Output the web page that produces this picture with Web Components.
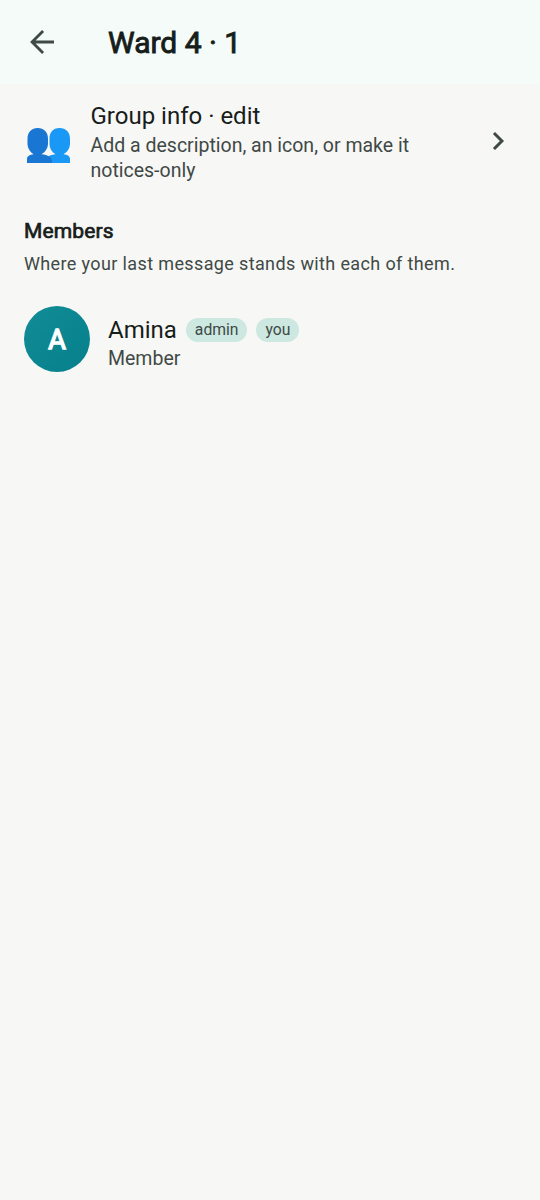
<!DOCTYPE html>
<html lang="en">
<head>
<meta charset="utf-8">
<title>Ward 4</title>
<style>
html,body{margin:0;height:100%;background:#f7f7f5}
body{font-family:Roboto,"Liberation Sans",sans-serif;color:#171d1b}
</style>
</head>
<body>
<group-screen></group-screen>
<script>
function define(name, html) {
  const t = document.createElement('template');
  t.innerHTML = html;
  customElements.define(name, class extends HTMLElement {
    constructor() {
      super();
      this.attachShadow({mode: 'open'}).append(t.content.cloneNode(true));
    }
  });
}

define('app-bar', `
<style>
:host{display:flex;align-items:center;height:84px;background:#f4fbf8;padding-left:24px;box-sizing:border-box}
svg{width:36px;height:36px;flex:none;margin-right:48px}
h1{margin:0;padding-top:2px;font-size:30px;line-height:36px;font-weight:400;-webkit-text-stroke:.9px #171d1b;white-space:nowrap}
</style>
<svg viewBox="0 0 24 24" fill="none" stroke="#3f4946" stroke-width="1.900"><path d="M20 12H5.400M12.700 4.700 5.400 12l7.300 7.300"/></svg>
<h1><slot></slot></h1>`);

define('people-icon', `
<style>:host{display:block;width:43px;height:35px}svg{display:block}</style>
<svg width="43" height="35" viewBox="0 0 43 35">
<path fill="#1998f6" d="M32.500 0C39 0 43 4 43 11v4.500c0 5-3 8.700-6.500 10.700 4.500 .5 6.500 2 6.500 4.800v4H20v-4c0-2.500 3-4.200 8.500-4.800-3.500-2-6-5.700-6-10.700V11C22.500 4 26 0 32.500 0z"/>
<path fill="#1976d2" d="M10.700 0C17 0 21 4 21 11v4.500c0 5-3 8.700-6.500 10.700C21 26.800 25 29.500 25 33v2H0v-4c0-2.500 2-4.200 6.500-4.800C3.500 24.200 .5 20.500 .5 15.500V11C.5 4 4.500 0 10.700 0z"/>
</svg>`);

define('info-row', `
<style>
:host{display:flex;align-items:flex-start;padding:18px 24px 12px;height:84px}
people-icon{margin:25.500px 20.500px 0 3px;flex:none}
.text{flex:1;width:0}
.title{font-size:24px;line-height:28px}
.sub{font-size:19.500px;line-height:25px;padding-top:3px;color:#3f4946;max-width:350px}
svg{flex:none;width:36px;height:36px;margin-top:21px}
</style>
<people-icon></people-icon>
<div class="text"><div class="title"><slot name="title"></slot></div><div class="sub"><slot></slot></div></div>
<svg viewBox="0 0 24 24" fill="none" stroke="#3f4946" stroke-width="2"><path d="M9.300 6.700 14.600 12l-5.300 5.300"/></svg>`);

define('section-head', `
<style>
:host{display:block;padding:18px 24px 0}
h2{margin:0;font-size:21px;line-height:30px;font-weight:400;-webkit-text-stroke:.7px #171d1b;letter-spacing:.15px}
p{margin:6px 0 0;font-size:18px;line-height:24px;letter-spacing:.37px;color:#3f4946;white-space:nowrap}
</style>
<h2><slot name="title"></slot></h2><p><slot></slot></p>`);

define('role-chip', `
<style>:host{display:block;height:24px;box-sizing:border-box;padding:0 9px;border-radius:12px;background:#cce8e1;color:#3f4946;font-size:15.700px;line-height:24px}</style><slot></slot>`);

define('member-avatar', `
<style>:host{display:flex;align-items:center;justify-content:center;width:66px;height:66px;border-radius:50%;background:linear-gradient(135deg,#128c96,#05808c);color:#fff;font-size:27px;line-height:32px;padding-top:1px;box-sizing:border-box;-webkit-text-stroke:1.400px #fff;flex:none}</style><slot></slot>`);

define('member-row', `
<style>
:host{display:flex;align-items:flex-start;padding:30px 24px 0;gap:18px}
.line{display:flex;align-items:center;gap:9px;height:30px}
.name{font-size:24px;line-height:30px}
.sub{font-size:19.500px;line-height:26px;padding-top:1px;color:#3f4946}
.text{padding-top:9px}
</style>
<member-avatar><slot name="initial"></slot></member-avatar>
<div class="text"><div class="line"><span class="name"><slot name="name"></slot></span><slot name="chips"></slot></div><div class="sub"><slot></slot></div></div>`);

define('group-screen', `
<style>:host{display:block;min-height:100%}</style>
<app-bar>Ward 4 · 1</app-bar>
<info-row><span slot="title">Group info · edit</span>Add a description, an icon, or make it notices-only</info-row>
<section-head><span slot="title">Members</span>Where your last message stands with each of them.</section-head>
<member-row><span slot="initial">A</span><span slot="name">Amina</span><role-chip slot="chips">admin</role-chip><role-chip slot="chips">you</role-chip>Member</member-row>`);
</script>
</body>
</html>
